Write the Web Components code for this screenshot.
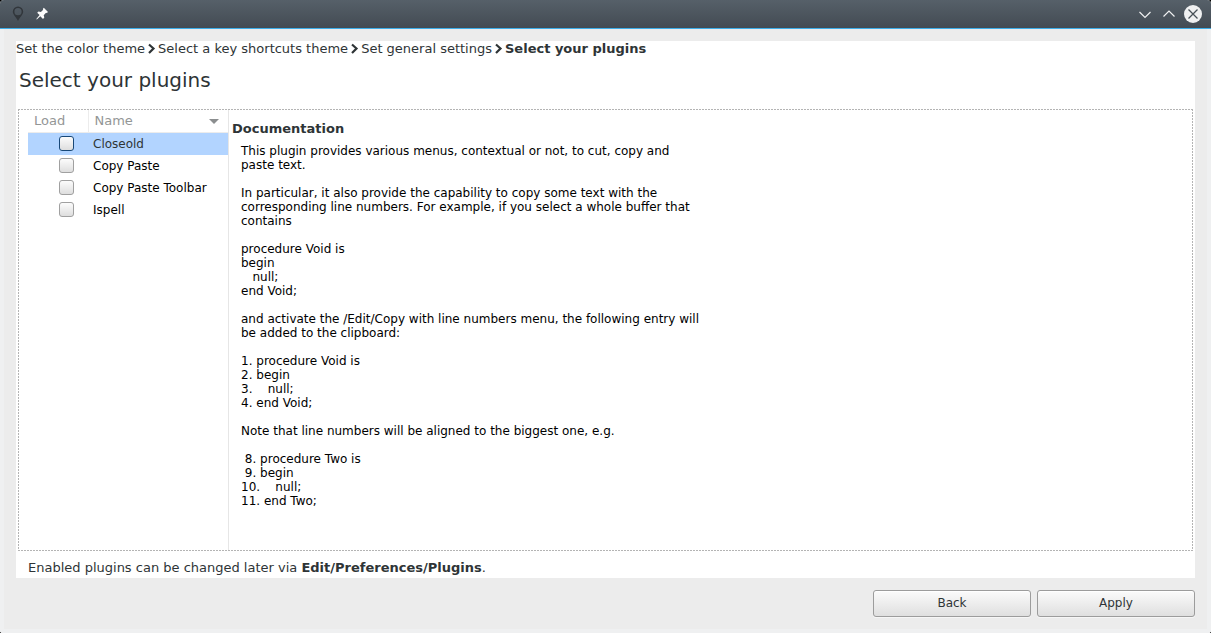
<!DOCTYPE html>
<html lang="en">
<head>
<meta charset="utf-8">
<title>Select your plugins</title>
<style>
  body { margin: 0; background: #000; font: 13px/16px "DejaVu Sans", Verdana, sans-serif; color: #2e3436; }
</style>
</head>
<body>
<setup-window>
  <title-bar slot="title"></title-bar>
  <step-trail slot="content"></step-trail>
  <plugin-page slot="content" heading="Select your plugins">
    <plugin-list slot="list"></plugin-list>
    <plugin-docs slot="docs"></plugin-docs>
    <span slot="note">Enabled plugins can be changed later via <b>Edit/Preferences/Plugins</b>.</span>
  </plugin-page>
  <push-button slot="actions">Back</push-button>
  <push-button slot="actions">Apply</push-button>
</setup-window>
<script>
const define = (name, html, setup) => customElements.define(name, class extends HTMLElement {
  constructor() {
    super();
    this.attachShadow({ mode: "open" }).innerHTML = html;
  }
  connectedCallback() { if (setup) setup(this, this.shadowRoot); }
});

define("setup-window", `
<style>
  :host { display: flex; flex-direction: column; min-height: 100vh; box-sizing: border-box; border-radius: 4px 4px 3px 3px; overflow: hidden; background: #ececec; }
  .frame { flex: 1; display: flex; flex-direction: column; padding: 12px 12px; border: 4px solid #eff0f1; border-top: 0; background: #ececec; }
  main { flex: 1; display: flex; flex-direction: column; background: #fff; }
  footer { display: flex; justify-content: flex-end; gap: 6px; padding-top: 12px; }
</style>
<slot name="title"></slot>
<div class="frame">
  <main><slot name="content"></slot></main>
  <footer><slot name="actions"></slot></footer>
</div>`);

define("title-bar", `
<style>
  :host { display: flex; align-items: center; height: 28px; padding: 0 8px; border-bottom: 1px solid #3daee9; background: linear-gradient(#566069, #434b53); }
  svg { display: block; }
  .left, .right { display: flex; align-items: center; gap: 4px; }
  .left { flex: 1; }
  button { all: unset; display: block; width: 20px; height: 20px; }
</style>
<div class="left">
  <svg width="20" height="20" viewBox="0 0 20 20"><path fill="#31363b" fill-rule="evenodd" d="M10 2.500a5.200 5.200 0 0 0-5.200 5.200c0 2.800 3.200 5.300 5.200 9.300 2-4 5.200-6.500 5.200-9.300a5.200 5.200 0 0 0-5.200-5.200zm0 1.600a3.600 3.600 0 1 1 0 7.200 3.600 3.600 0 0 1 0-7.200z"/></svg>
  <button aria-label="Pin"><svg width="20" height="20" viewBox="0 0 20 20"><path fill="#fcfcfc" d="M11.800 3.800l4.200 4.200-1.200 1-.8-.3-2.300 2.600.6 2.300-1.300 1.300-2.700-2.700L4.800 15.500l-.5-.5L7.600 11 5.200 8.700l1.300-1.300 2.400.6L11.200 5.800l-.4-.9z"/></svg></button>
</div>
<div class="right">
  <button aria-label="Minimize"><svg width="20" height="20" viewBox="0 0 20 20"><path d="M4.500 8l5.500 5.500 5.500-5.500" fill="none" stroke="#eff0f1" stroke-width="1.200"/></svg></button>
  <button aria-label="Maximize"><svg width="20" height="20" viewBox="0 0 20 20"><path d="M4.500 12.500l5.500-5.500 5.500 5.500" fill="none" stroke="#eff0f1" stroke-width="1.200"/></svg></button>
  <button aria-label="Close"><svg width="20" height="20" viewBox="0 0 20 20"><circle cx="10" cy="10" r="9" fill="#eff0f1"/><path d="M5.500 5.500l9 9m0-9l-9 9" stroke="#475057" stroke-width="1.300"/></svg></button>
</div>`);

define("step-trail", `
<style>
  :host { display: block; line-height: 15px; }
  ol { list-style: none; margin: 0; padding: 0; display: flex; white-space: nowrap; }
  svg { width: 13px; height: 15px; display: block; }
  li { display: flex; }
</style>
<nav aria-label="Steps"><ol></ol></nav>`, (el, root) => {
  const steps = ["Set the color theme", "Select a key shortcuts theme", "Set general settings", "Select your plugins"];
  const arrow = '<svg viewBox="0 0 13 15"><path d="M4 3.500l4.500 4-4.500 4.500" fill="none" stroke="#2e3436" stroke-width="2.200"/></svg>';
  root.querySelector("ol").innerHTML = steps.map((s, i) =>
    i < steps.length - 1 ? `<li><span>${s}</span>${arrow}</li>` : `<li aria-current="step"><b>${s}</b></li>`).join("");
});

define("plugin-page", `
<style>
  :host { flex: 1; display: flex; flex-direction: column; padding: 0 2px; }
  h1 { margin: 12px 0 17px 1px; font-size: 20px; line-height: 24px; font-weight: normal; }
  .panes {
    --dash: #b4b4b4 0 2px, transparent 2px 3px;
    flex: 1; display: grid; grid-template-columns: 210px 1fr; padding: 1px;
    background:
      repeating-linear-gradient(90deg, var(--dash)) top / 100% 1px no-repeat,
      repeating-linear-gradient(90deg, var(--dash)) bottom / 100% 1px no-repeat,
      repeating-linear-gradient(var(--dash)) left / 1px 100% no-repeat,
      repeating-linear-gradient(var(--dash)) right / 1px 100% no-repeat;
  }
  p { margin: 0; padding: 9px 10px 2px; }
</style>
<h1></h1>
<div class="panes"><slot name="list"></slot><slot name="docs"></slot></div>
<p><slot name="note"></slot></p>`, (el, root) => {
  root.querySelector("h1").textContent = el.getAttribute("heading");
});

define("plugin-list", `
<style>
  :host { display: block; padding-left: 9px; border-right: 1px solid #e6e6e6; font-size: 12px; color: #000; }
  table { width: 100%; border-collapse: collapse; table-layout: fixed; }
  th { height: 22px; padding: 0 6px; border-bottom: 1px solid #ececec; text-align: left; font-size: 13px; font-weight: normal; color: #939696; }
  th + th { border-left: 1px solid #ececec; }
  .sort { display: flex; align-items: center; justify-content: space-between; padding-right: 3px; }
  td { height: 22px; padding: 0; }
  td + td { padding-left: 5px; }
  tr.selected { background: #b2d4ff; color: #2e3436; }
  input { appearance: none; box-sizing: border-box; display: block; width: 15px; height: 15px; margin: 0 14px 1px auto; border: 1px solid #a0a0a0; border-radius: 3px; background: linear-gradient(#fcfcfc, #dedede); }
  .selected input { border-color: #184878; }
</style>
<table>
  <colgroup><col style="width:60px"><col></colgroup>
  <thead><tr><th>Load</th><th><span class="sort">Name<svg width="10" height="5" viewBox="0 0 10 5"><path fill="#8b8e8f" d="M0 0h10L5 5z"/></svg></span></th></tr></thead>
  <tbody></tbody>
</table>`, (el, root) => {
  root.querySelector("tbody").innerHTML = ["Closeold", "Copy Paste", "Copy Paste Toolbar", "Ispell"].map((n, i) =>
    `<tr${i ? "" : ' class="selected"'}><td><input type="checkbox" id="p${i}"></td><td><label for="p${i}">${n}</label></td></tr>`).join("");
});

define("plugin-docs", `
<style>
  :host { display: block; padding: 11px 3px 0; }
  h2 { margin: 0 0 7px; font-size: 13px; line-height: 16px; }
  div { padding-left: 9px; font-size: 12px; line-height: 14px; white-space: pre-wrap; color: #000; }
</style>
<h2>Documentation</h2>
<div>This plugin provides various menus, contextual or not, to cut, copy and
paste text.

In particular, it also provide the capability to copy some text with the
corresponding line numbers. For example, if you select a whole buffer that
contains

procedure Void is
begin
   null;
end Void;

and activate the /Edit/Copy with line numbers menu, the following entry will
be added to the clipboard:

1. procedure Void is
2. begin
3.    null;
4. end Void;

Note that line numbers will be aligned to the biggest one, e.g.

 8. procedure Two is
 9. begin
10.    null;
11. end Two;</div>`);

define("push-button", `
<style>
  :host { display: block; }
  button { box-sizing: border-box; width: 158px; height: 27px; padding: 0 0 2px; border: 1px solid #9c9c9c; border-radius: 3px; background: linear-gradient(#fbfbfb, #dfdfdf); box-shadow: inset 0 1px #fff, 0 1px #f6f6f6; font: inherit; font-size: 12px; color: inherit; }
</style>
<button type="button"><slot></slot></button>`);
</script>
</body>
</html>
